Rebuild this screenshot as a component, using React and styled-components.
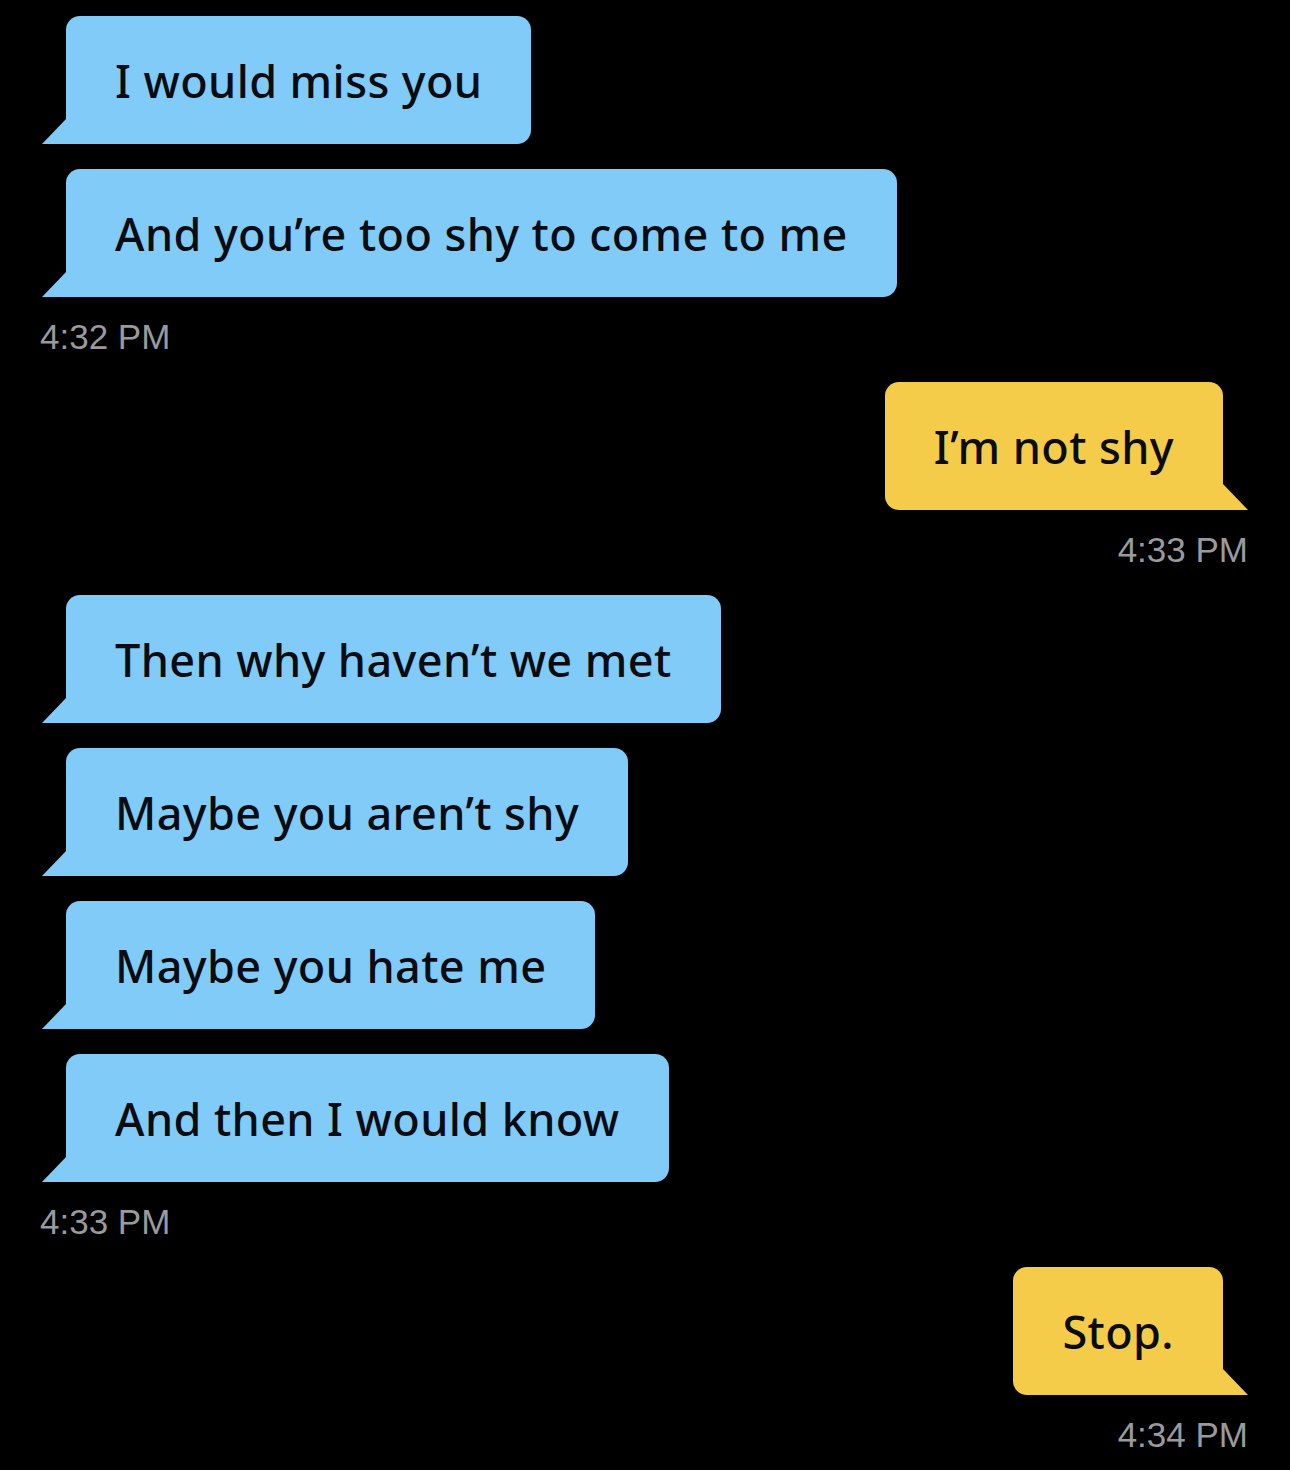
import React from 'react';
import styled, { createGlobalStyle } from 'styled-components';

const blue = '#81cbf8';
const yellow = '#f5cc49';
const ink = '#0b0b12';
const stampGray = '#9a9a9e';

const GlobalStyle = createGlobalStyle`
  html, body {
    margin: 0;
    background: #000;
  }
`;

const Thread = styled.div`
  display: flex;
  flex-direction: column;
  gap: 25px;
  padding: 16px 42px 16px 42px;
  min-height: 1470px;
  box-sizing: border-box;
  background: #000;
`;

const Group = styled.div`
  display: flex;
  flex-direction: column;
  align-items: ${({ mine }) => (mine ? 'flex-end' : 'flex-start')};
  gap: 25px;
`;

const Bubble = styled.div`
  position: relative;
  box-sizing: border-box;
  height: 128px;
  display: flex;
  align-items: center;
  padding: 0 49px;
  margin: ${({ mine }) => (mine ? '0 25px 0 0' : '0 0 0 24px')};
  background: ${({ mine }) => (mine ? yellow : blue)};
  border-radius: ${({ mine }) => (mine ? '14px 14px 0 14px' : '14px 14px 14px 0')};
  color: ${ink};
  font-family: 'Noto Sans', 'Open Sans', sans-serif;
  font-weight: 500;
  font-size: 45px;
  letter-spacing: 0.4px;
  white-space: nowrap;

  /* speech tail */
  &::before {
    content: '';
    position: absolute;
    bottom: 0;
    width: 25px;
    height: 26px;
    background: inherit;
    ${({ mine }) =>
      mine
        ? `right: -25px; clip-path: polygon(0 0, 100% 100%, 0 100%);`
        : `left: -24px; clip-path: polygon(100% 0, 100% 100%, 0 100%);`}
  }
`;

const Stamp = styled.div`
  margin: ${({ mine }) => (mine ? '-5px 0 0 0' : '-5px 0 0 -2px')};
  height: 40px;
  line-height: 40px;
  font-family: 'Liberation Sans', Arial, sans-serif;
  font-size: 35px;
  color: ${stampGray};
`;

const thread = [
  { mine: false, time: '4:32 PM', lines: ['I would miss you', 'And you’re too shy to come to me'] },
  { mine: true, time: '4:33 PM', lines: ['I’m not shy'] },
  {
    mine: false,
    time: '4:33 PM',
    lines: ['Then why haven’t we met', 'Maybe you aren’t shy', 'Maybe you hate me', 'And then I would know'],
  },
  { mine: true, time: '4:34 PM', lines: ['Stop.'] },
];

export default function App() {
  return (
    <>
      <GlobalStyle />
      <Thread>
        {thread.map((g, i) => (
          <Group key={i} mine={g.mine}>
            {g.lines.map(line => (
              <Bubble key={line} mine={g.mine}>
                {line}
              </Bubble>
            ))}
            <Stamp mine={g.mine}>{g.time}</Stamp>
          </Group>
        ))}
      </Thread>
    </>
  );
}
